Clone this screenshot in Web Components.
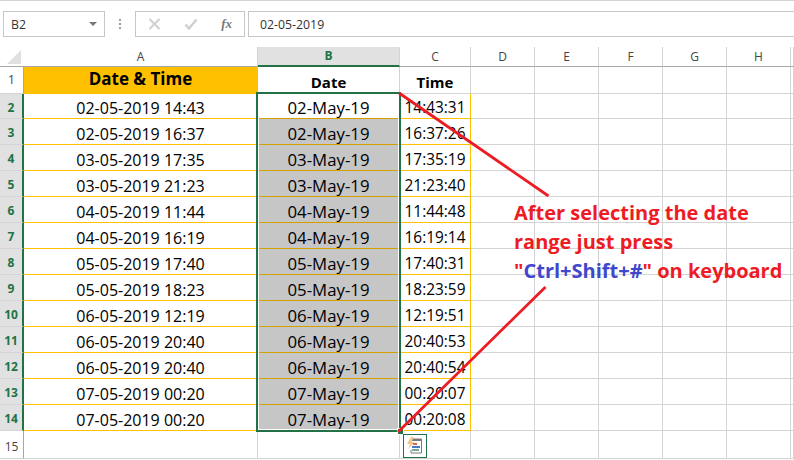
<!DOCTYPE html>
<html><head><meta charset="utf-8"><style>html,body{margin:0;padding:0;background:#fff;overflow:hidden}body{width:794px;height:460px}</style></head>
<body><x-app></x-app>
<script>
class XFormulaBar extends HTMLElement{constructor(){super();this.attachShadow({mode:'open'}).innerHTML=`<style>
:host{display:flex;box-sizing:border-box;height:47px;border-top:1px solid #d4d4d4;padding:10px 0 10px 3px;font:12.300px "Open Sans",sans-serif;color:#333;align-items:stretch}
.box{box-sizing:border-box;border:1px solid #c6c6c6;display:flex;align-items:center}
.name{width:102px;padding:0 4px 0 7px;justify-content:space-between}
.name i{width:0;height:0;border:4px solid transparent;border-top:4px solid #777;border-bottom:0;margin-right:3px}
.dots{width:30px;display:flex;flex-direction:column;align-items:center;justify-content:center;gap:2px}
.dots b{width:2px;height:2px;background:#9a9a9a}
.fx{width:110px;justify-content:space-between;padding:0 12px 0 12px}
.fx span{font:italic 700 13px "Liberation Serif",serif;color:#777}
.input{flex:1;margin-left:3px;border-right:0;padding-left:11px}
</style><div class="box name"><span>B2</span><i></i></div><div class="dots"><b></b><b></b><b></b></div>
<div class="box fx"><svg width="13" height="12" viewBox="0 0 13 12"><path d="M1.500 1 11.500 11M11.500 1 1.500 11" stroke="#cfcfcf" stroke-width="2" fill="none"/></svg><svg width="14" height="12" viewBox="0 0 14 12"><path d="M1.500 6.500 5 10.500 12.500 1.500" stroke="#cfcfcf" stroke-width="2.400" fill="none"/></svg><span>fx</span></div>
<div class="box input">02-05-2019</div>`}}
customElements.define('x-formula-bar',XFormulaBar);

class XQuickIcon extends HTMLElement{constructor(){super();this.attachShadow({mode:'open'}).innerHTML=`<style>:host{position:absolute;left:403px;top:434px;width:24px;height:24px;display:block}svg{display:block}</style>
<svg width="24" height="24" viewBox="0 0 24 24"><rect x=".5" y=".5" width="23" height="23" fill="#fff" stroke="#217346"/>
<path d="M8 5H18.500V19H8V16" fill="#fff" stroke="#7a7a7a"/><rect x="8" y="5" width="11" height="2" fill="#7a7a7a"/>
<path d="M8 3 4 10H7L5.500 15 11.500 8H8.500L11 3Z" fill="#f4c58a"/>
<rect x="10" y="9" width="4" height="2" fill="#e0664a"/><rect x="9" y="12" width="8" height="2" fill="#3f7cc4"/><rect x="9" y="15" width="7" height="2" fill="#6fae8e"/></svg>`}}
customElements.define('x-quick-icon',XQuickIcon);

class XAnnotation extends HTMLElement{constructor(){super();this.attachShadow({mode:'open'}).innerHTML=`<style>
:host{position:absolute;left:514px;top:198px;display:block;font:700 20px/29px "Open Sans",sans-serif;color:#ed1c24;white-space:nowrap}
div{height:29px}span{color:#3f48cc}</style>
<div>After selecting the date</div><div>range just press</div><div>"<span>Ctrl+Shift+#</span>" on keyboard</div>`}}
customElements.define('x-annotation',XAnnotation);

class XSheet extends HTMLElement{constructor(){super();
const rows=[['02-05-2019 14:43','02-May-19','14:43:31'],['02-05-2019 16:37','02-May-19','16:37:26'],['03-05-2019 17:35','03-May-19','17:35:19'],['03-05-2019 21:23','03-May-19','21:23:40'],['04-05-2019 11:44','04-May-19','11:44:48'],['04-05-2019 16:19','04-May-19','16:19:14'],['05-05-2019 17:40','05-May-19','17:40:31'],['05-05-2019 18:23','05-May-19','18:23:59'],['06-05-2019 12:19','06-May-19','12:19:51'],['06-05-2019 20:40','06-May-19','20:40:53'],['06-05-2019 20:40','06-May-19','20:40:54'],['07-05-2019 00:20','07-May-19','00:20:07'],['07-05-2019 00:20','07-May-19','00:20:08']];
let h='<div class="c corner"><svg width="14" height="14" viewBox="0 0 14 14"><path d="M14 0V14H0Z" fill="#e0e0e0"/></svg></div>';
'ABCDEFGH'.split('').forEach(l=>h+=`<div class="c ch ${l=='B'?'sel':''}">${l}</div>`);h+='<div class="c ch"></div>';
const blanks=n=>'<div class="c"></div>'.repeat(n);
h+='<div class="c rh">1</div><div class="c hdr big">Date &amp; Time</div><div class="c hdr">Date</div><div class="c hdr">Time</div>'+blanks(6);
rows.forEach((r,i)=>{h+=`<div class="c rh on">${i+2}</div><div class="c d y">${r[0]}</div><div class="c d y b ${i?'gray':'first'}">${r[1]}</div><div class="c d y cc">${r[2]}</div>`+blanks(6)});
h+='<div class="c rh low">15</div>'+blanks(9);
this.attachShadow({mode:'open'}).innerHTML=`<style>
:host{display:block;position:relative;height:413px;font:14px "Open Sans",sans-serif;color:#000}
.g{display:grid;grid-template-columns:24px 234px 142px 71px 64px 64px 64px 64px 64px 3px;grid-template-rows:20px 27px 25px repeat(12,26px) 28px}
.c{box-sizing:border-box;border-right:1px solid #d4d4d4;border-bottom:1px solid #d4d4d4;display:flex;align-items:flex-end;justify-content:center;min-width:0;overflow:hidden;line-height:20px}
.corner{border-right:0;border-bottom:1px solid #a6a6a6;align-items:flex-start;justify-content:flex-start;padding:3px 0 0 7px;background:#fff}
.ch{align-items:center;font:12px/16px "Open Sans",sans-serif;color:#444;border-bottom:1px solid #a6a6a6;}
.ch.sel{background:#e1e1e1;color:#217346;font-weight:700;border-bottom:2px solid #217346}
.rh{align-items:center;font:12px/16px "Open Sans",sans-serif;color:#444;border-right:1px solid #a6a6a6}
.rh.on{background:#e1e1e1;color:#217346;font-weight:700;border-right:2px solid #217346;padding-top:3px}
.rh.low{padding-top:5px}
.hdr{font-weight:700;font-size:15px;padding-bottom:1px}
.big{background:#ffc000;font-size:17px;align-items:center;border-color:#ffc000;padding-bottom:3px}
.d{font-size:16px}
.d.b{font-size:16.800px}
.d.cc{font-size:15.400px}
.y{border-bottom-color:#ffc000}
.cc{border-right-color:#ffc000}
.gray,.first{border-bottom-color:#d4a000}
.gray{background:#c6c6c6}
.sel-box{position:absolute;left:256px;top:45px;width:145px;height:340px;box-sizing:border-box;border:2px solid #217346;box-shadow:inset 0 0 0 1px #fff;pointer-events:none}
.handle{position:absolute;left:397px;top:381px;width:5px;height:5px;background:#217346;border:1px solid #fff;box-sizing:content-box}
.lines{position:absolute;left:0;top:0;pointer-events:none}
</style><div class="g">${h}</div><div class="sel-box"></div><div class="handle"></div>
<svg class="lines" width="794" height="413" viewBox="0 47 794 413"><path d="M399 93 548.500 196M398 432 545.500 287" stroke="#ed1c24" stroke-width="2.800" fill="none"/></svg>`}}
customElements.define('x-sheet',XSheet);

class XApp extends HTMLElement{constructor(){super();this.attachShadow({mode:'open'}).innerHTML=`<style>:host{display:block;position:relative;width:794px;height:460px;overflow:hidden}</style><x-formula-bar></x-formula-bar><x-sheet></x-sheet><x-annotation></x-annotation><x-quick-icon></x-quick-icon>`}}
customElements.define('x-app',XApp);
</script></body></html>
